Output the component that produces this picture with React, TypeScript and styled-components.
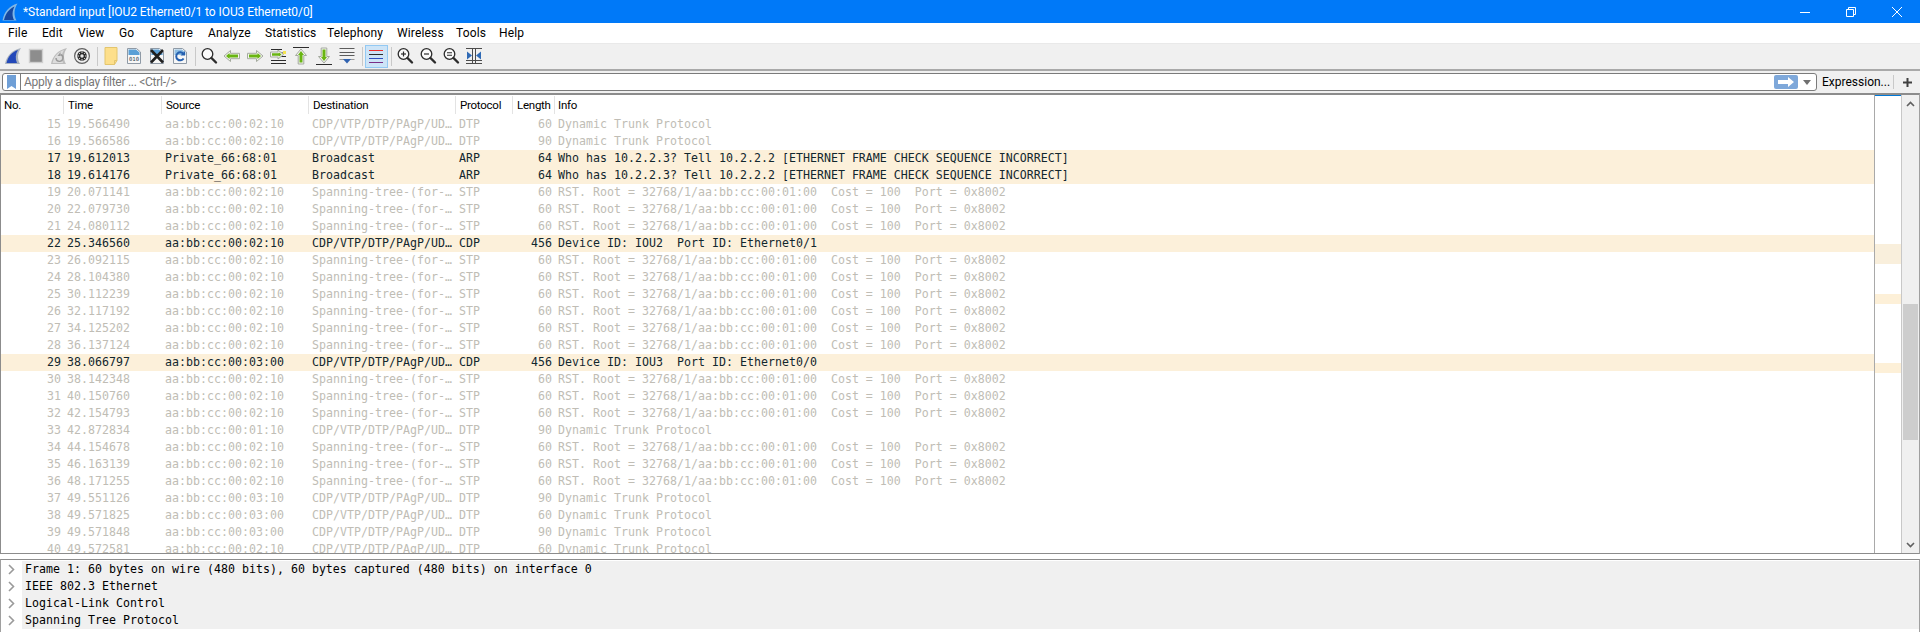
import React from 'react';
import styled, { createGlobalStyle } from 'styled-components';

const GlobalStyle = createGlobalStyle`
    html, body {
        margin: 0;
        padding: 0;
        background: #ffffff;
    }
    * {
        box-sizing: border-box;
    }
`;

const uiFont = 'Roboto, "Noto Sans", sans-serif';
const monoFont = '"DejaVu Sans Mono", "Liberation Mono", monospace';

const Page = styled.div`
    width: 1920px;
    height: 632px;
    overflow: hidden;
    display: flex;
    flex-direction: column;
    background: #ffffff;
    font-family: ${uiFont};
    font-size: 12px;
    color: #000000;
`;

// Window title bar
const TitleBar = styled.div`
    height: 23px;
    flex: none;
    display: flex;
    align-items: center;
    background: #0079f8;
    color: #ffffff;
`;

const TitleLogo = styled.div`
    width: 23px;
    padding-left: 2px;
    display: flex;
`;

const TitleText = styled.div`
    flex: 1;
    letter-spacing: -0.07px;
`;

const WindowButton = styled.div`
    width: 46px;
    height: 23px;
    display: flex;
    align-items: center;
    justify-content: center;
`;

// Menu bar
const MenuBar = styled.div`
    height: 21px;
    flex: none;
    display: flex;
    align-items: center;
    border-bottom: 1px solid #e9e9e9;
`;

const MenuItem = styled.div<{ $w: number }>`
    width: ${({ $w }) => $w}px;
    padding-left: 8px;
    letter-spacing: 0.15px;
`;

// Main toolbar
const Toolbar = styled.div`
    height: 25px;
    flex: none;
    display: flex;
    align-items: center;
    padding-left: 2px;
    background: #f0f0f0;
`;

const ToolButton = styled.div<{ $active?: boolean }>`
    width: 23px;
    height: 23px;
    padding: 0 1px 1px 0;
    display: flex;
    align-items: center;
    justify-content: center;
    background: ${({ $active }) => ($active ? '#cde4f7' : 'transparent')};
    border: 1px solid ${({ $active }) => ($active ? '#93c9f3' : 'transparent')};
`;

const ToolSep = styled.div`
    width: 6px;
    height: 19px;
    display: flex;
    justify-content: center;

    &::after {
        content: '';
        width: 1px;
        background: #c9c9c9;
    }
`;

// Display filter row
const FilterRow = styled.div`
    height: 24px;
    flex: none;
    display: flex;
    align-items: center;
    padding: 0 0 0 2px;
    background: #f0f0f0;
    border-top: 2px solid #a9a9a9;
`;

const FilterBox = styled.div`
    width: 1815px;
    height: 18px;
    display: flex;
    align-items: center;
    background: #ffffff;
    border: 1px solid #7b7b7b;
    border-radius: 3px;
`;

const Bookmark = styled.div`
    width: 18px;
    height: 16px;
    flex: none;
    display: flex;
    align-items: center;
    justify-content: center;
    border-right: 1px solid #7b7b7b;
`;

const FilterHint = styled.div`
    flex: 1;
    padding-left: 3px;
    color: #777777;
    letter-spacing: -0.28px;
`;

const ApplyButton = styled.div`
    width: 24px;
    height: 14px;
    display: flex;
    align-items: center;
    justify-content: center;
    background: #7ea8da;
    border-radius: 2px;
`;

const DropArrow = styled.div`
    width: 18px;
    display: flex;
    justify-content: center;
`;

const ExpressionLabel = styled.div`
    width: 76px;
    padding-left: 5px;
    white-space: nowrap;
`;

const FilterSep = styled.div`
    width: 1px;
    height: 14px;
    background: #c9c9c9;
`;

const PlusButton = styled.div`
    flex: 1;
    display: flex;
    justify-content: center;
`;

// Packet list with minimap and scrollbar
const PacketPane = styled.div`
    height: 461px;
    flex: none;
    display: flex;
    border-top: 2px solid #8c8c8c;
    border-bottom: 1px solid #8c8c8c;
    border-left: 1px solid #8c8c8c;
    border-right: 1px solid #a0a0a0;
`;

const PacketList = styled.div`
    flex: 1;
    min-width: 0;
    overflow: hidden;
`;

const columns = '63px 98px 147px 147px 57px 42px 1fr';

const HeaderRow = styled.div`
    height: 21px;
    display: grid;
    grid-template-columns: ${columns};
`;

const HeaderCell = styled.div<{ $first?: boolean; $last?: boolean }>`
    height: 18px;
    padding-left: ${({ $first, $last }) => ($first ? 3 : $last ? 3 : 4)}px;
    margin-top: 1px;
    border-right: 1px solid ${({ $last }) => ($last ? 'transparent' : '#e3e3e3')};
    font-size: 11.5px;
    line-height: 18px;
    letter-spacing: -0.25px;
    white-space: nowrap;
`;

const PacketRow = styled.div<{ $hit: boolean }>`
    height: 17px;
    display: grid;
    grid-template-columns: ${columns};
    background: ${({ $hit }) => ($hit ? '#fcf0da' : '#ffffff')};
    color: ${({ $hit }) => ($hit ? '#12272e' : '#c0bdb5')};
    font-family: ${monoFont};
    font-size: 11.6px;
    letter-spacing: 0.017px;
    line-height: 16px;
    white-space: pre;
`;

const Cell = styled.div<{ $right?: boolean }>`
    overflow: hidden;
    text-align: ${({ $right }) => ($right ? 'right' : 'left')};
    padding: ${({ $right }) => ($right ? '0 3px 0 0' : '0 0 0 3px')};
`;

const Minimap = styled.div`
    width: 28px;
    flex: none;
    border-left: 1px solid #a9a9a9;
    border-right: 1px solid #c8c8c8;
`;

const MiniTop = styled.div`
    height: 1px;
    background: #0078d7;
`;

const MiniMark = styled.div<{ $gap: number; $h: number; $strong?: boolean }>`
    height: ${({ $h }) => $h}px;
    margin-top: ${({ $gap }) => $gap}px;
    background: ${({ $strong }) => ($strong ? '#f9efdc' : '#fdf0d8')};
`;

const ScrollBar = styled.div`
    width: 17px;
    flex: none;
    display: flex;
    flex-direction: column;
    align-items: center;
    background: #f0f0f0;
`;

const ScrollArrow = styled.div`
    height: 17px;
    flex: none;
    display: flex;
    align-items: center;
    justify-content: center;
`;

const ScrollTrack = styled.div`
    flex: 1;
    width: 100%;
    padding: 192px 1px 0;
`;

const ScrollThumb = styled.div`
    height: 136px;
    background: #cdcdcd;
`;

// Packet details
const DetailPane = styled.div`
    flex: 1;
    margin-top: 5px;
    padding: 1px 0 0 1px;
    border-top: 1px solid #8c8c8c;
    border-left: 1px solid #a0a0a0;
    border-right: 1px solid #a0a0a0;
`;

const DetailRow = styled.div`
    height: 17px;
    display: flex;
`;

const Expander = styled.div`
    width: 20px;
    flex: none;
    display: flex;
    align-items: center;
    justify-content: center;
    padding-right: 2px;
`;

const DetailText = styled.div`
    flex: 1;
    padding-left: 3px;
    background: #f0f0f0;
    color: #000000;
    font-family: ${monoFont};
    font-size: 11.6px;
    letter-spacing: 0.017px;
    line-height: 16px;
    white-space: pre;
`;

const Svg = ({ children, size = 18 }: { children: React.ReactNode; size?: number }) => (
    <svg width={size} height={size} viewBox="0 0 18 18" fill="none">
        {children}
    </svg>
);

const Fin = ({ fill, edge }: { fill: string; edge: string }) => (
    <>
        <path d="M1 17 C2.5 9 8 3 17 1 C13.5 6 13 11.5 16 17 Z" fill={edge} />
        <path d="M2.5 16 C4 9.5 8 5 14 3 C11.5 7 11 11.5 13 16 Z" fill={fill} />
    </>
);

const Sheet = ({ top }: { top?: string }) => (
    <>
        <path d="M2.5 1.5 H11.5 L15.5 5 V16.5 H2.5 Z" fill="#f7f7f7" stroke="#8f9aa6" />
        {top && <path d="M3.5 2.5 H11 L14.5 5.5 V8 H3.5 Z" fill={top} />}
    </>
);

const Glass = ({ sign }: { sign?: 'plus' | 'minus' | 'equal' }) => (
    <>
        <circle cx="7.5" cy="7" r="5.3" fill="#fbfbfb" stroke="#2c2c2c" strokeWidth="1.3" />
        <path d="M11.5 11 L16 15.5" stroke="#2c2c2c" strokeWidth="2.4" strokeLinecap="round" />
        {sign && sign !== 'equal' && <path d="M5 7 H10" stroke="#2c2c2c" strokeWidth="1.2" />}
        {sign === 'plus' && <path d="M7.5 4.5 V9.5" stroke="#2c2c2c" strokeWidth="1.2" />}
        {sign === 'equal' && <path d="M5 5.8 H10 M5 8.2 H10" stroke="#2c2c2c" strokeWidth="1.1" />}
    </>
);

// Green arrows: pale grey shell with a green core
const GreenArrow = ({ shell, core }: { shell: string; core: string }) => (
    <>
        <path d={shell} fill="#f4f4f0" stroke="#a4aa9e" strokeWidth="1" />
        <path d={core} fill="#69b512" />
    </>
);

const ToolIcons = {
    start: <Svg><Fin fill="#2348b9" edge="#a9b2bf" /></Svg>,
    stop: (
        <Svg>
            <rect x="2.5" y="2.5" width="13" height="13" fill="#8d8d8d" stroke="#cfcfcf" strokeWidth="1.4" />
        </Svg>
    ),
    restart: (
        <Svg>
            <Fin fill="#dcdcdc" edge="#bcbcbc" />
            <path d="M10.5 7.5 A3.5 3.5 0 1 1 6 11" stroke="#9a9a9a" strokeWidth="1.4" />
            <path d="M10.5 5 V9 H7.5 Z" fill="#9a9a9a" />
        </Svg>
    ),
    options: (
        <Svg>
            <circle cx="9" cy="9" r="7.4" fill="#efefef" stroke="#606060" strokeWidth="1.2" />
            <circle cx="9" cy="9" r="4.8" fill="#2f2f2f" />
            <circle cx="9" cy="9" r="1.7" fill="#e8e8e8" />
            <path d="M9 4.6 V6 M9 12 V13.4 M4.6 9 H6 M12 9 H13.4 M5.9 5.9 L6.9 6.9 M11.1 11.1 L12.1 12.1 M5.9 12.1 L6.9 11.1 M11.1 6.9 L12.1 5.9" stroke="#dcdcdc" strokeWidth="1" />
        </Svg>
    ),
    open: (
        <Svg>
            <path d="M3 0.5 H15 V13.5 L12.5 17.5 H3 Z" fill="#fddf8b" stroke="#e3c56d" />
            <path d="M12.5 17.5 V13.5 H15" stroke="#e3c56d" />
        </Svg>
    ),
    save: (
        <Svg>
            <Sheet top="#5a9fd6" />
            <text x="9" y="14" textAnchor="middle" fontFamily={monoFont} fontSize="5.6" fill="#33414f">010</text>
        </Svg>
    ),
    close: (
        <Svg>
            <Sheet top="#5a9fd6" />
            <path d="M3 3 L15 15.5 M15 3 L3 15.5" stroke="#1f1f1f" strokeWidth="2.6" />
        </Svg>
    ),
    reload: (
        <Svg>
            <Sheet top="#8dbde2" />
            <path d="M12.5 7 A4 4 0 1 0 12.6 11.5" stroke="#2560b0" strokeWidth="2" />
            <path d="M14 4 V8.5 H9.5 Z" fill="#2560b0" />
        </Svg>
    ),
    find: <Svg><Glass /></Svg>,
    back: (
        <Svg>
            <GreenArrow
                shell="M1 9 L7.5 3.5 V6.3 H16.5 V11.7 H7.5 V14.5 Z"
                core="M3 9 L6.5 6 V7.5 H15 V10.5 H6.5 V12 Z"
            />
        </Svg>
    ),
    forward: (
        <Svg>
            <GreenArrow
                shell="M17 9 L10.5 3.5 V6.3 H1.5 V11.7 H10.5 V14.5 Z"
                core="M15 9 L11.5 6 V7.5 H3 V10.5 H11.5 V12 Z"
            />
        </Svg>
    ),
    goTo: (
        <Svg>
            <path d="M2 2.5 H13 M11 6 H17 M11 9.5 H17 M2 13.5 H17 M2 16.5 H17" stroke="#2c2c2c" strokeWidth="1" />
            <rect x="14" y="4" width="3" height="3" fill="#f4e34f" />
            <GreenArrow
                shell="M14.5 7.5 L9 3 V5 H1.5 V10 H9 V12 Z"
                core="M12.5 7.5 L9.8 5.3 V6.2 H3 V8.8 H9.8 V9.7 Z"
            />
        </Svg>
    ),
    first: (
        <Svg>
            <path d="M1 0.5 H17" stroke="#2c2c2c" strokeWidth="1" />
            <GreenArrow
                shell="M9 2 L14.5 8.5 H11.8 V17 H6.2 V8.5 H3.5 Z"
                core="M9 4 L12 8 H10.5 V15.5 H7.5 V8 H6 Z"
            />
        </Svg>
    ),
    last: (
        <Svg>
            <path d="M1 17.5 H17" stroke="#2c2c2c" strokeWidth="1" />
            <GreenArrow
                shell="M9 16 L14.5 9.5 H11.8 V1 H6.2 V9.5 H3.5 Z"
                core="M9 14 L12 10 H10.5 V2.5 H7.5 V10 H6 Z"
            />
        </Svg>
    ),
    scroll: (
        <Svg>
            <path d="M1.5 1.5 H16.5 M1.5 5.5 H16.5 M1.5 8.5 H16.5" stroke="#5c5c5c" strokeWidth="1" />
            <path d="M1.5 12.5 H16.5" stroke="#9a9a9a" strokeWidth="1" />
            <path d="M5 12 H13 L9 16.5 Z" fill="#2f62b0" />
        </Svg>
    ),
    colorize: (
        <Svg>
            <path d="M2 3.5 H16" stroke="#ea2f2f" strokeWidth="1" />
            <path d="M2 7.5 H16" stroke="#2c2c2c" strokeWidth="1" />
            <path d="M2 11.5 H16" stroke="#2f4fc0" strokeWidth="1" />
            <path d="M2 15.5 H16" stroke="#7a2f86" strokeWidth="1" />
        </Svg>
    ),
    zoomIn: <Svg><Glass sign="plus" /></Svg>,
    zoomOut: <Svg><Glass sign="minus" /></Svg>,
    zoomNormal: <Svg><Glass sign="equal" /></Svg>,
    resize: (
        <Svg>
            <path d="M1 1.5 H17 M1 16.5 H17 M7.5 1.5 V16.5 M10.5 1.5 V16.5 M1 13.5 H17" stroke="#4c4c4c" strokeWidth="1" />
            <path d="M2 4.5 L7 8.5 L2 12.5 Z M16 4.5 L11 8.5 L16 12.5 Z" fill="#2f6ab5" />
        </Svg>
    ),
};

type ToolName = keyof typeof ToolIcons;

const toolbarGroups: ToolName[][] = [
    ['start', 'stop', 'restart', 'options'],
    ['open', 'save', 'close', 'reload'],
    ['find', 'back', 'forward', 'goTo', 'first', 'last', 'scroll'],
    ['colorize'],
    ['zoomIn', 'zoomOut', 'zoomNormal', 'resize'],
];

const menus: [string, number][] = [
    ['File', 34],
    ['Edit', 36],
    ['View', 41],
    ['Go', 31],
    ['Capture', 58],
    ['Analyze', 57],
    ['Statistics', 62],
    ['Telephony', 70],
    ['Wireless', 59],
    ['Tools', 43],
    ['Help', 40],
];

const headers = ['No.', 'Time', 'Source', 'Destination', 'Protocol', 'Length', 'Info'];

const DTP_DST = 'CDP/VTP/DTP/PAgP/UD…';
const STP_DST = 'Spanning-tree-(for-…';
const STP_INFO = 'RST. Root = 32768/1/aa:bb:cc:00:01:00  Cost = 100  Port = 0x8002';
const DTP_INFO = 'Dynamic Trunk Protocol';
const ARP_INFO = 'Who has 10.2.2.3? Tell 10.2.2.2 [ETHERNET FRAME CHECK SEQUENCE INCORRECT]';

type Packet = {
    no: number;
    time: string;
    src: string;
    dst: string;
    proto: string;
    len: number;
    info: string;
    hit?: boolean;
};

const stp = (no: number, time: string): Packet => ({
    no,
    time,
    src: 'aa:bb:cc:00:02:10',
    dst: STP_DST,
    proto: 'STP',
    len: 60,
    info: STP_INFO,
});

const dtp = (no: number, time: string, src: string, len: number): Packet => ({
    no,
    time,
    src,
    dst: DTP_DST,
    proto: 'DTP',
    len,
    info: DTP_INFO,
});

const arp = (no: number, time: string): Packet => ({
    no,
    time,
    src: 'Private_66:68:01',
    dst: 'Broadcast',
    proto: 'ARP',
    len: 64,
    info: ARP_INFO,
    hit: true,
});

const cdp = (no: number, time: string, src: string, info: string): Packet => ({
    no,
    time,
    src,
    dst: DTP_DST,
    proto: 'CDP',
    len: 456,
    info,
    hit: true,
});

const packets: Packet[] = [
    dtp(15, '19.566490', 'aa:bb:cc:00:02:10', 60),
    dtp(16, '19.566586', 'aa:bb:cc:00:02:10', 90),
    arp(17, '19.612013'),
    arp(18, '19.614176'),
    stp(19, '20.071141'),
    stp(20, '22.079730'),
    stp(21, '24.080112'),
    cdp(22, '25.346560', 'aa:bb:cc:00:02:10', 'Device ID: IOU2  Port ID: Ethernet0/1'),
    stp(23, '26.092115'),
    stp(24, '28.104380'),
    stp(25, '30.112239'),
    stp(26, '32.117192'),
    stp(27, '34.125202'),
    stp(28, '36.137124'),
    cdp(29, '38.066797', 'aa:bb:cc:00:03:00', 'Device ID: IOU3  Port ID: Ethernet0/0'),
    stp(30, '38.142348'),
    stp(31, '40.150760'),
    stp(32, '42.154793'),
    dtp(33, '42.872834', 'aa:bb:cc:00:01:10', 90),
    stp(34, '44.154678'),
    stp(35, '46.163139'),
    stp(36, '48.171255'),
    dtp(37, '49.551126', 'aa:bb:cc:00:03:10', 90),
    dtp(38, '49.571825', 'aa:bb:cc:00:03:00', 60),
    dtp(39, '49.571848', 'aa:bb:cc:00:03:00', 90),
    dtp(40, '49.572581', 'aa:bb:cc:00:02:10', 60),
];

const details = [
    'Frame 1: 60 bytes on wire (480 bits), 60 bytes captured (480 bits) on interface 0',
    'IEEE 802.3 Ethernet',
    'Logical-Link Control',
    'Spanning Tree Protocol',
];

const App = () => (
    <Page>
        <GlobalStyle />
        <TitleBar>
            <TitleLogo>
                <svg width="16" height="18" viewBox="0 0 16 18">
                    <path d="M0.5 17.5 C2 9 7 3 15.5 0.5 C12 6 11.5 12 14.5 17.5 Z" fill="#7fb6e6" />
                    <path d="M2 17 C3.5 10.5 7 6 12.5 3.5 C10 8 10 13 12 17 Z" fill="#17479e" />
                </svg>
            </TitleLogo>
            <TitleText>*Standard input [IOU2 Ethernet0/1 to IOU3 Ethernet0/0]</TitleText>
            <WindowButton>
                <svg width="10" height="10" viewBox="0 0 10 10">
                    <path d="M0 5.5 H10" stroke="#ffffff" strokeWidth="1" />
                </svg>
            </WindowButton>
            <WindowButton>
                <svg width="10" height="10" viewBox="0 0 10 10" fill="none">
                    <path d="M0.5 2.5 H7.5 V9.5 H0.5 Z M2.5 2.5 V0.5 H9.5 V7.5 H7.5" stroke="#ffffff" strokeWidth="1" />
                </svg>
            </WindowButton>
            <WindowButton>
                <svg width="10" height="10" viewBox="0 0 10 10">
                    <path d="M0 0 L10 10 M10 0 L0 10" stroke="#ffffff" strokeWidth="1" />
                </svg>
            </WindowButton>
        </TitleBar>

        <MenuBar>
            {menus.map(([label, w]) => (
                <MenuItem key={label} $w={w}>{label}</MenuItem>
            ))}
        </MenuBar>

        <Toolbar>
            {toolbarGroups.map((group, i) => (
                <React.Fragment key={i}>
                    {i > 0 && <ToolSep />}
                    {group.map((name) => (
                        <ToolButton key={name} $active={name === 'colorize'}>
                            {ToolIcons[name]}
                        </ToolButton>
                    ))}
                </React.Fragment>
            ))}
        </Toolbar>

        <FilterRow>
            <FilterBox>
                <Bookmark>
                    <svg width="9" height="14" viewBox="0 0 9 14">
                        <path d="M0 0 H9 V14 L4.5 11 L0 14 Z" fill="#6f9fd6" />
                    </svg>
                </Bookmark>
                <FilterHint>Apply a display filter ... &lt;Ctrl-/&gt;</FilterHint>
                <ApplyButton>
                    <svg width="16" height="10" viewBox="0 0 16 10">
                        <path d="M0 3 H10 V0 L16 5 L10 10 V7 H0 Z" fill="#ffffff" />
                    </svg>
                </ApplyButton>
                <DropArrow>
                    <svg width="8" height="5" viewBox="0 0 8 5">
                        <path d="M0 0 H8 L4 5 Z" fill="#707070" />
                    </svg>
                </DropArrow>
            </FilterBox>
            <ExpressionLabel>Expression...</ExpressionLabel>
            <FilterSep />
            <PlusButton>
                <svg width="9" height="9" viewBox="0 0 9 9">
                    <path d="M4.5 0 V9 M0 4.5 H9" stroke="#404040" strokeWidth="2" />
                </svg>
            </PlusButton>
        </FilterRow>

        <PacketPane>
            <PacketList>
                <HeaderRow>
                    {headers.map((h) => (
                        <HeaderCell key={h} $first={h === 'No.'} $last={h === 'Info'}>{h}</HeaderCell>
                    ))}
                </HeaderRow>
                {packets.map((p) => (
                    <PacketRow key={p.no} $hit={!!p.hit}>
                        <Cell $right>{p.no}</Cell>
                        <Cell>{p.time}</Cell>
                        <Cell>{p.src}</Cell>
                        <Cell>{p.dst}</Cell>
                        <Cell>{p.proto}</Cell>
                        <Cell $right>{p.len}</Cell>
                        <Cell>{p.info}</Cell>
                    </PacketRow>
                ))}
            </PacketList>
            <Minimap>
                <MiniTop />
                <MiniMark $gap={148} $h={20} $strong />
                <MiniMark $gap={30} $h={10} />
                <MiniMark $gap={59} $h={10} />
            </Minimap>
            <ScrollBar>
                <ScrollArrow>
                    <svg width="9" height="6" viewBox="0 0 9 6" fill="none">
                        <path d="M1 5 L4.5 1.5 L8 5" stroke="#606060" strokeWidth="1.6" />
                    </svg>
                </ScrollArrow>
                <ScrollTrack>
                    <ScrollThumb />
                </ScrollTrack>
                <ScrollArrow>
                    <svg width="9" height="6" viewBox="0 0 9 6" fill="none">
                        <path d="M1 1 L4.5 4.5 L8 1" stroke="#606060" strokeWidth="1.6" />
                    </svg>
                </ScrollArrow>
            </ScrollBar>
        </PacketPane>

        <DetailPane>
            {details.map((d) => (
                <DetailRow key={d}>
                    <Expander>
                        <svg width="7" height="11" viewBox="0 0 7 11" fill="none">
                            <path d="M1 1 L5.5 5.5 L1 10" stroke="#9a9a9a" strokeWidth="1.6" />
                        </svg>
                    </Expander>
                    <DetailText>{d}</DetailText>
                </DetailRow>
            ))}
        </DetailPane>
    </Page>
);

export default App;
